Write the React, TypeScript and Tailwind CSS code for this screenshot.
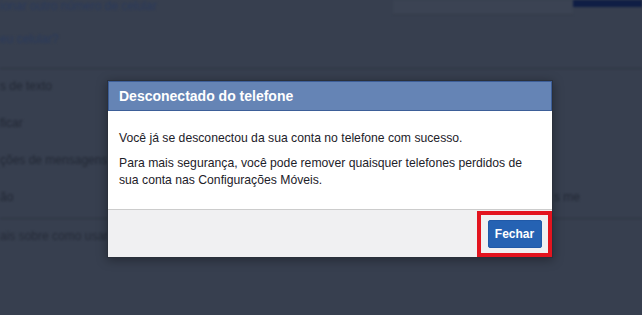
import React from "react";

export default function App() {
  const font = { fontFamily: '"Liberation Sans", Arial, sans-serif' };
  return (
    <div className="relative w-[642px] h-[315px] overflow-hidden bg-[#373f4f]" style={font}>
      {/* dimmed background page */}
      <div className="blur-[1.2px] text-[12px] leading-[14px]">
        <div className="flex h-[15px] items-start">
          <div className="w-[393px] text-[#2a3a5c] leading-[12px]">ionar outro número de celular</div>
          <div className="w-[180px] h-[15px] bg-[#3b4353] border-b border-[#343b48]" />
          <div className="w-[69px] h-[7px] bg-[#0f1e45]" />
        </div>
        <div className="h-[53px] pt-[17px] text-[#2a3a5c]">eu celular?</div>
        <div className="border-t border-[#2e3542]" />
        <div className="flex flex-col text-[#232936]">
          <div className="h-[37px] pt-[10px]">s de texto</div>
          <div className="h-[37px] pt-[10px]">ficar</div>
          <div className="h-[37px] pt-[10px]">ções de mensagens</div>
          <div className="h-[38px] pt-[10px] flex justify-between pr-[62px]">
            <span>ão</span>
            <span>s me</span>
          </div>
        </div>
        <div className="border-t border-[#2e3542]" />
        <div className="pt-[10px] text-[#262c39]">ais sobre como usar</div>
      </div>

      {/* dialog */}
      <div className="absolute left-[107px] top-[80px] w-[446px] border border-[#2a303b] shadow-[0_2px_10px_rgba(0,0,0,0.35)]">
        <div className="h-[30px] bg-[#6584b5] border border-[#3d5e98] flex items-center pl-[10px] text-white font-bold text-[14px]">
          Desconectado do telefone
        </div>
        <div className="bg-white pl-[11px] pr-[22px] pt-[19px] pb-[20px] text-[12.2px] leading-[17px] text-[#1d2129] h-[98px]">
          <p className="mb-[8px]">Você já se desconectou da sua conta no telefone com sucesso.</p>
          <p>Para mais segurança, você pode remover quaisquer telefones perdidos de sua conta nas Configurações Móveis.</p>
        </div>
        <div className="h-[48px] bg-[#f0f0f2] border-t border-[#cccccc] flex items-center justify-end">
          <div className="border-[4px] border-[#e3141f] h-[46px] w-[75px] flex items-center justify-center">
            <button className="h-[28px] w-[54px] rounded-[2px] bg-[#2562b3] border border-[#2059a8] text-white font-bold text-[12px]">
              Fechar
            </button>
          </div>
        </div>
      </div>
    </div>
  );
}
